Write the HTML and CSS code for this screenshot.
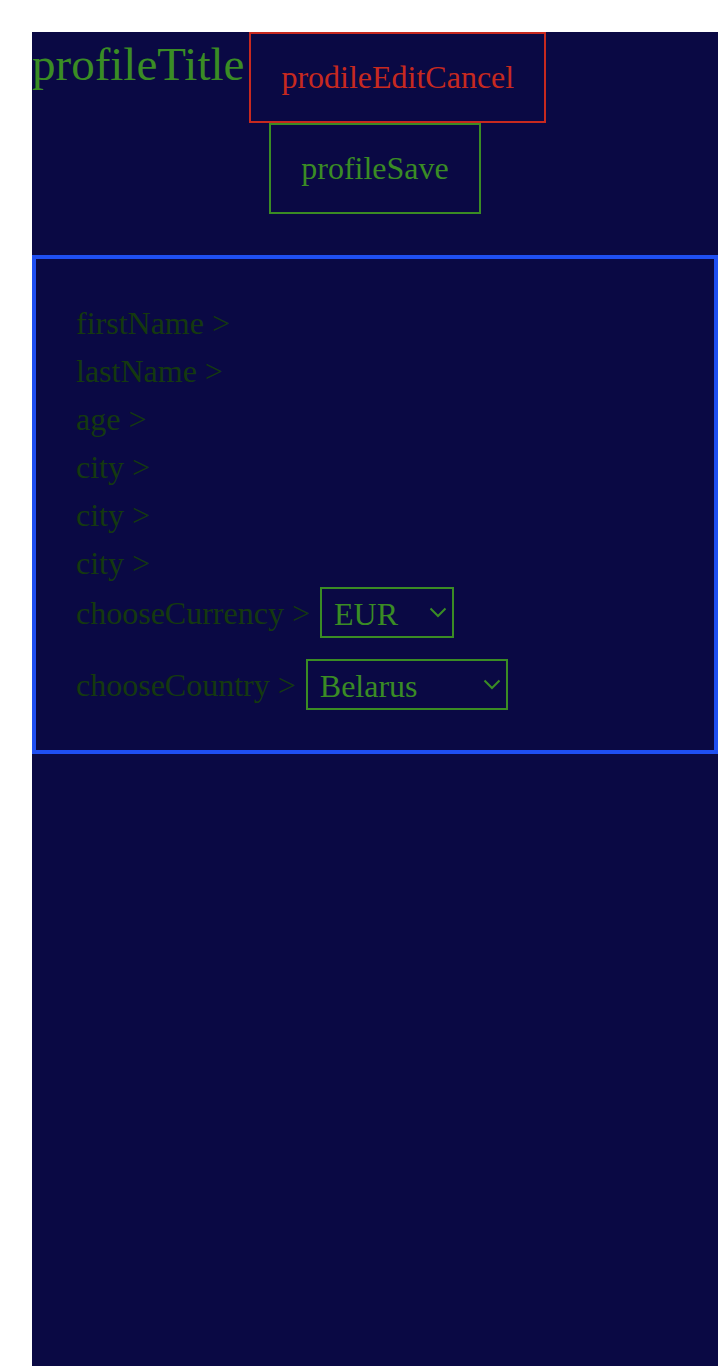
FILE: index.html
```html
<!DOCTYPE html>
<html lang="en">
<head>
<meta charset="utf-8">
<title>Profile</title>
<link rel="stylesheet" href="styles.css">
</head>
<body>
<main class="panel">
  <header class="header">
    <div class="header-row">
      <h1 class="title">profileTitle</h1>
      <button class="btn btn-cancel" type="button">prodileEditCancel</button>
    </div>
    <div class="save-row">
      <button class="btn btn-save" type="button">profileSave</button>
    </div>
  </header>
  <section class="form">
    <div class="field">firstName &gt;</div>
    <div class="field">lastName &gt;</div>
    <div class="field">age &gt;</div>
    <div class="field">city &gt;</div>
    <div class="field">city &gt;</div>
    <div class="field">city &gt;</div>
    <div class="field-select">
      <span class="field-label">chooseCurrency &gt;</span>
      <span class="select-wrap select-currency">
        <select class="select">
          <option>EUR</option>
          <option>USD</option>
          <option>BYN</option>
        </select>
        <svg class="chevron" viewBox="0 0 18 11" width="18" height="11" aria-hidden="true"><polyline points="1.5,1.5 9,9 16.5,1.5" fill="none" stroke="currentColor" stroke-width="2"/></svg>
      </span>
    </div>
    <div class="field-select second">
      <span class="field-label">chooseCountry &gt;</span>
      <span class="select-wrap select-country">
        <select class="select">
          <option>Belarus</option>
          <option>Lithuania</option>
          <option>Poland</option>
        </select>
        <svg class="chevron" viewBox="0 0 18 11" width="18" height="11" aria-hidden="true"><polyline points="1.5,1.5 9,9 16.5,1.5" fill="none" stroke="currentColor" stroke-width="2"/></svg>
      </span>
    </div>
  </section>
</main>
</body>
</html>
```

FILE: styles.css
```css
html, body {
  margin: 0;
  padding: 0;
  background: #ffffff;
}

body {
  padding: 32px 0 0 32px;
  font-family: "Liberation Serif", "Times New Roman", serif;
  box-sizing: border-box;
}

.panel {
  background: #0a0944;
  min-height: calc(100vh - 32px);
  box-sizing: border-box;
}

.header-row {
  display: flex;
  align-items: flex-start;
  gap: 5px;
}

.title {
  margin: 0;
  font-size: 47px;
  font-weight: normal;
  line-height: 64px;
  color: #3a8c24;
}

.btn {
  font-family: "Liberation Serif", "Times New Roman", serif;
  font-size: 32px;
  line-height: 37px;
  background: transparent;
  padding: 25px 30px;
  margin: 0;
  border-style: solid;
  border-width: 2px;
  cursor: pointer;
}

.btn-cancel {
  color: #c7291f;
  border-color: #c7291f;
}

.btn-save {
  color: #3a8c24;
  border-color: #3a8c24;
}

.save-row {
  display: flex;
  justify-content: center;
}

.form {
  margin-top: 41px;
  border: 4px solid #1f4ff2;
  padding: 40px 40px 40px 40px;
  color: #15390f;
  font-size: 32px;
}

.field {
  line-height: 48px;
}

.field-select {
  display: flex;
  align-items: center;
  gap: 10px;
  height: 51px;
}

.field-select.second {
  margin-top: 21px;
}

.field-label {
  line-height: 48px;
}

.select-wrap {
  position: relative;
  display: block;
  color: #3a8c24;
}

.select {
  -webkit-appearance: none;
  appearance: none;
  display: block;
  height: 51px;
  box-sizing: border-box;
  margin: 0;
  padding: 3px 30px 0 12px;
  border: 2px solid #3a8c24;
  border-radius: 0;
  background: transparent;
  color: #3a8c24;
  font-family: "Liberation Serif", "Times New Roman", serif;
  font-size: 32px;
}

.select-currency .select {
  width: 134px;
}

.select-country .select {
  width: 202px;
}

.chevron {
  position: absolute;
  right: 7px;
  top: 50%;
  margin-top: -6px;
  pointer-events: none;
}
```
